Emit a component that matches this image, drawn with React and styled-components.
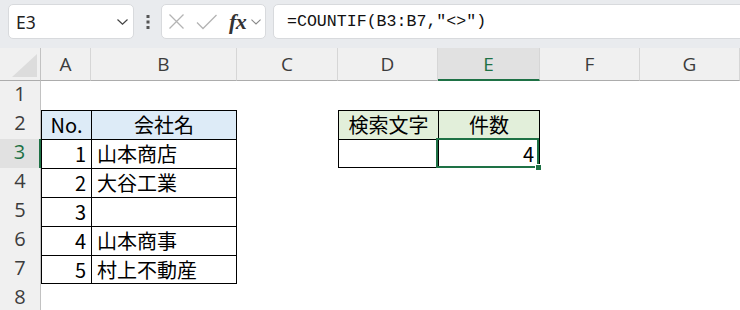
import React from 'react';
import styled, { createGlobalStyle, css } from 'styled-components';

const Global = createGlobalStyle`
  html, body { margin: 0; padding: 0; background: #fff; }
  body { width: 740px; height: 310px; overflow: hidden; font-family: "Noto Sans", sans-serif; }
`;

const Page = styled.div`
  width: 740px;
  height: 310px;
  overflow: hidden;
  display: flex;
  flex-direction: column;
  background: #fff;
`;

const Toolbar = styled.div`
  height: 48px;
  flex: none;
  box-sizing: border-box;
  background: #e9ebee;
  display: flex;
  align-items: flex-start;
  padding: 4px 0 0 8px;
`;

const Box = styled.div`
  height: 35px;
  box-sizing: border-box;
  background: #fff;
  border: 1px solid #d8dadd;
  border-radius: 5px;
  display: flex;
  align-items: center;
`;

const NameBox = styled(Box)`
  width: 126px;
  padding: 0 5px 0 7px;
  justify-content: space-between;
  font-family: "Noto Sans", sans-serif;
  font-size: 17.5px;
  color: #222;
`;

const Grip = styled.div`
  width: 27px;
  height: 35px;
  display: flex;
  align-items: center;
  justify-content: center;
`;

const IconBox = styled(Box)`
  width: 105px;
  padding-left: 6px;
`;

const Fx = styled.span`
  font-family: "Liberation Serif", serif;
  font-style: italic;
  font-weight: bold;
  font-size: 22px;
  color: #333;
  margin-left: 11px;
  line-height: 1;
  letter-spacing: -0.5px;
`;

const FormulaBox = styled(Box)`
  flex: 1;
  margin-left: 7px;
  margin-right: -10px;
  border-radius: 5px 0 0 5px;
  padding-left: 13px;
  font-family: "Liberation Mono", monospace;
  font-size: 16.6px;
  color: #111;
`;

const Sheet = styled.div`
  display: grid;
  grid-template-columns: 41px 50px 146px 101px 100px 102px 100px 100px;
  grid-template-rows: 33px repeat(8, 29px);
`;

const Corner = styled.div`
  background: #f0f0f0;
  border-right: 1px solid #c2c2c2;
  border-bottom: 1px solid #acacac;
  box-sizing: border-box;
  display: flex;
  align-items: flex-end;
  justify-content: flex-end;
  padding: 0 3px 3px 0;
`;

const ColHeader = styled.div`
  background: ${p => (p.$active ? '#e1e1e1' : '#f0f0f0')};
  box-sizing: border-box;
  border-right: 1px solid #d6d6d6;
  border-bottom: ${p => (p.$active ? '2px solid #1e7145' : '1px solid #acacac')};
  display: flex;
  align-items: center;
  justify-content: center;
  font-family: "Open Sans", sans-serif;
  font-size: 19px;
  color: ${p => (p.$active ? '#1e7145' : '#3c3c3c')};
  padding-bottom: ${p => (p.$active ? '0' : '1px')};
`;

const RowHeader = styled.div`
  background: ${p => (p.$active ? '#e1e1e1' : '#f0f0f0')};
  box-sizing: border-box;
  border-right: ${p => (p.$active ? '2px solid #1e7145' : '1px solid #c2c2c2')};
  display: flex;
  align-items: center;
  justify-content: center;
  padding-bottom: 4px;
  font-family: "Open Sans", sans-serif;
  font-size: 20px;
  color: ${p => (p.$active ? '#1e7145' : '#3c3c3c')};
`;

const Cell = styled.div`
  position: relative;
  z-index: ${p => (p.$selected ? 2 : 'auto')};
  box-sizing: border-box;
  background: ${p => p.$bg || '#fff'};
  padding: 0 ${p => (p.$align === 'right' ? '5px' : '4px')} 0 ${p => (p.$align === 'left' ? '5px' : '4px')};
  text-align: ${p => p.$align || 'left'};
  font-family: "Noto Sans CJK JP", "Noto Sans", sans-serif;
  font-size: 20px;
  line-height: 28px;
  color: #000;
  white-space: nowrap;
  ${p => p.$t && css`border-top: 1px solid #000;`}
  ${p => p.$l && css`border-left: 1px solid #000;`}
  ${p => p.$r && css`border-right: 1px solid #000;`}
  ${p => p.$b && css`border-bottom: 1px solid #000;`}
`;

const Selection = styled.div`
  position: absolute;
  left: -3px;
  top: -2px;
  width: 103px;
  height: 30px;
  box-sizing: border-box;
  border: 2px solid #1e7145;
  pointer-events: none;
`;

const Handle = styled.div`
  position: absolute;
  right: -4px;
  bottom: -4px;
  width: 5px;
  height: 5px;
  background: #1e7145;
  outline: 1px solid #fff;
`;

const Chevron = ({ w = 11, h = 6, color = '#444' }) => (
  <svg width={w} height={h} viewBox="0 0 11 6">
    <path d="M0.5 0.5 L5.5 5.2 L10.5 0.5" fill="none" stroke={color} strokeWidth="1.2" />
  </svg>
);

const COLS = ['A', 'B', 'C', 'D', 'E', 'F', 'G'];

const BLUE = '#ddebf7';
const GREEN = '#e2efda';

const rows = [
  { n: 1, cells: {} },
  {
    n: 2,
    cells: {
      A: { text: 'No.', align: 'center', bg: BLUE, t: 1, l: 1 },
      B: { text: '会社名', align: 'center', bg: BLUE, t: 1, l: 1, r: 1 },
      D: { text: '検索文字', align: 'center', bg: GREEN, t: 1, l: 1 },
      E: { text: '件数', align: 'center', bg: GREEN, t: 1, l: 1, r: 1 },
    },
  },
  {
    n: 3,
    cells: {
      A: { text: '1', align: 'right', t: 1, l: 1 },
      B: { text: '山本商店', align: 'left', t: 1, l: 1, r: 1 },
      D: { text: '', t: 1, l: 1, b: 1 },
      E: { text: '4', align: 'right', t: 1, l: 1, r: 1, b: 1, sel: true },
    },
  },
  {
    n: 4,
    cells: {
      A: { text: '2', align: 'right', t: 1, l: 1 },
      B: { text: '大谷工業', align: 'left', t: 1, l: 1, r: 1 },
    },
  },
  {
    n: 5,
    cells: {
      A: { text: '3', align: 'right', t: 1, l: 1 },
      B: { text: '', t: 1, l: 1, r: 1 },
    },
  },
  {
    n: 6,
    cells: {
      A: { text: '4', align: 'right', t: 1, l: 1 },
      B: { text: '山本商事', align: 'left', t: 1, l: 1, r: 1 },
    },
  },
  {
    n: 7,
    cells: {
      A: { text: '5', align: 'right', t: 1, l: 1, b: 1 },
      B: { text: '村上不動産', align: 'left', t: 1, l: 1, r: 1, b: 1 },
    },
  },
  { n: 8, cells: {} },
];

export default function App() {
  return (
    <Page>
      <Global />
      <Toolbar>
        <NameBox>
          <span>E3</span>
          <Chevron />
        </NameBox>
        <Grip>
          <svg width="4" height="16" viewBox="0 0 4 16">
            <rect x="0.5" y="1" width="3" height="3" fill="#555" />
            <rect x="0.5" y="6.5" width="3" height="3" fill="#555" />
            <rect x="0.5" y="12" width="3" height="3" fill="#555" />
          </svg>
        </Grip>
        <IconBox>
          <svg width="17" height="17" viewBox="0 0 17 17">
            <path d="M1.5 1.5 L15.5 15.5 M15.5 1.5 L1.5 15.5" stroke="#b4b4b4" strokeWidth="1.3" fill="none" />
          </svg>
          <svg width="22" height="16" viewBox="0 0 22 16" style={{ marginLeft: 11 }}>
            <path d="M1 8.5 L7 14.5 L20.5 1" stroke="#b4b4b4" strokeWidth="1.3" fill="none" />
          </svg>
          <Fx>fx</Fx>
          <span style={{ marginLeft: 5, display: 'flex' }}>
            <Chevron w={10} h={6} color="#888" />
          </span>
        </IconBox>
        <FormulaBox>=COUNTIF(B3:B7,"&lt;&gt;")</FormulaBox>
      </Toolbar>
      <Sheet>
        <Corner>
          <svg width="25" height="23" viewBox="0 0 25 23">
            <polygon points="25,0 25,23 0,23" fill="#dcdcdc" />
          </svg>
        </Corner>
        {COLS.map(c => (
          <ColHeader key={c} $active={c === 'E'}>{c}</ColHeader>
        ))}
        {rows.map(r => (
          <React.Fragment key={r.n}>
            <RowHeader $active={r.n === 3}>{r.n}</RowHeader>
            {COLS.map(c => {
              const d = r.cells[c] || {};
              return (
                <Cell
                  key={c}
                  $align={d.align}
                  $bg={d.bg}
                  $t={d.t}
                  $l={d.l}
                  $r={d.r}
                  $b={d.b}
                  $selected={d.sel}
                >
                  {d.text}
                  {d.sel && (
                    <Selection>
                      <Handle />
                    </Selection>
                  )}
                </Cell>
              );
            })}
          </React.Fragment>
        ))}
      </Sheet>
    </Page>
  );
}
